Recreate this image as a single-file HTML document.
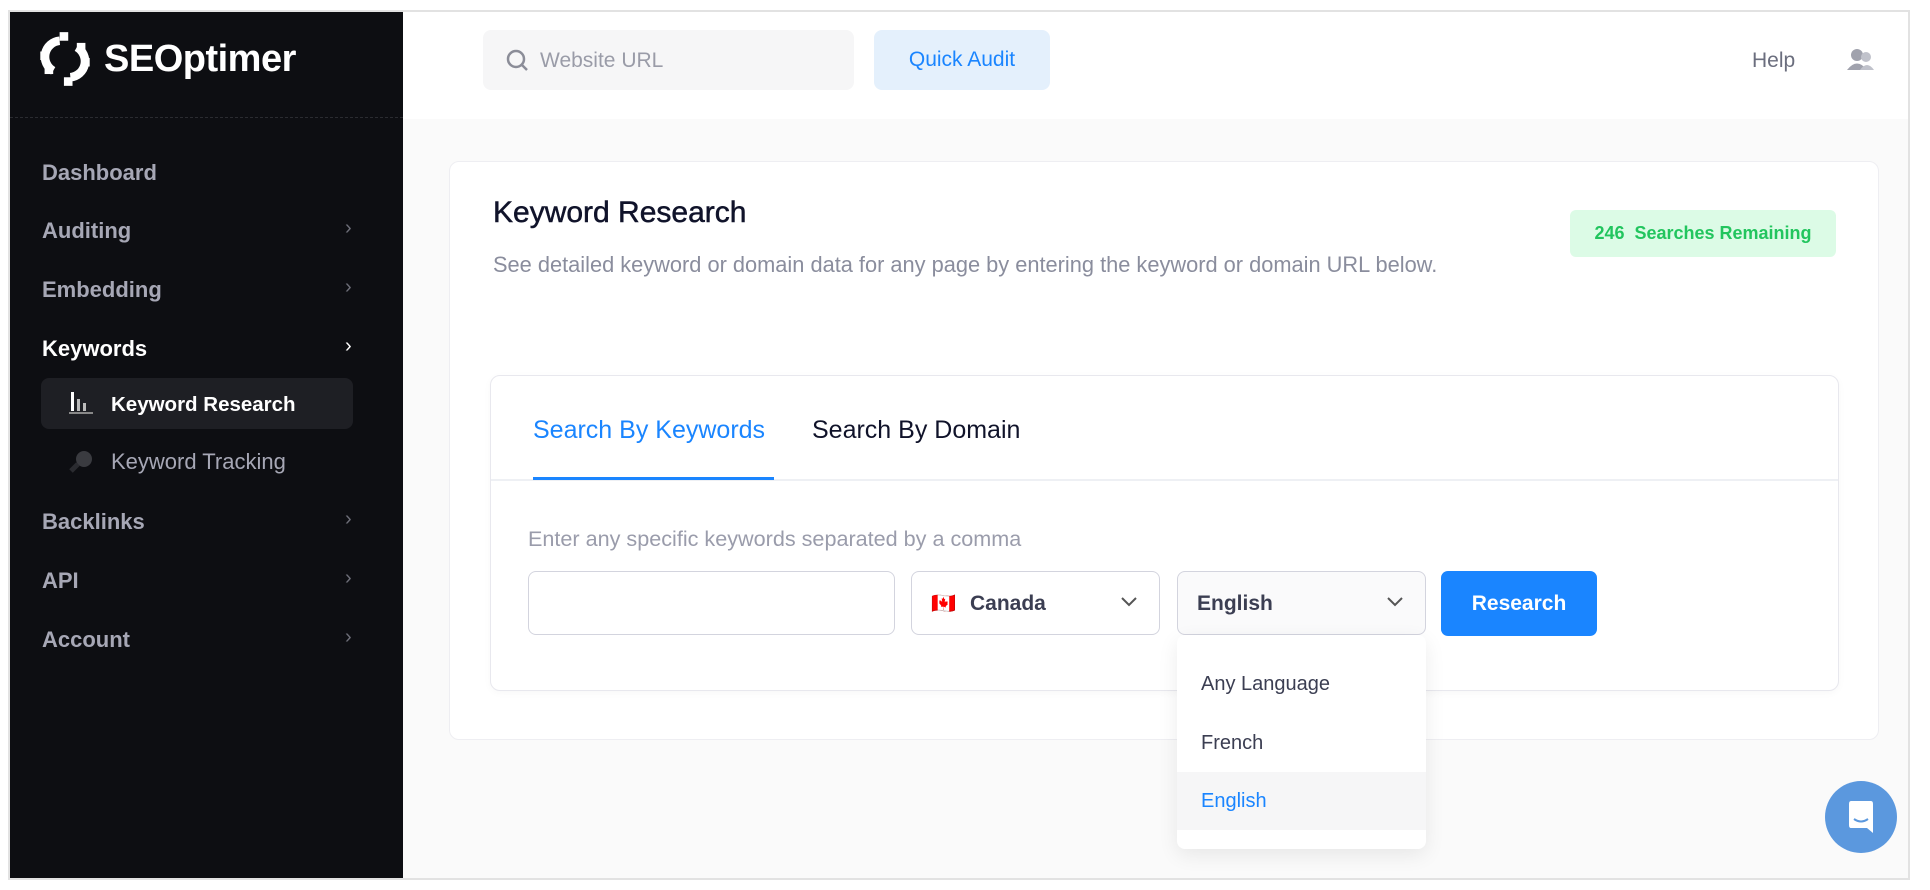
<!DOCTYPE html>
<html><head><meta charset="utf-8"><style>
*{box-sizing:border-box;margin:0;padding:0}
body{width:1930px;height:890px;background:#fff;font-family:"Liberation Sans",sans-serif;position:relative;overflow:hidden}
.frame{position:absolute;left:8px;top:10px;width:1902px;height:870px;border:2px solid #e2e2e2;background:#fafafa;overflow:hidden}
.side{position:absolute;left:0;top:0;width:393px;height:100%;background:#0d0e12}
.logo{position:absolute;left:24px;top:18px;display:flex;align-items:center;color:#fff;font-weight:bold;font-size:38px;letter-spacing:-0.5px}
.dash{position:absolute;left:0;top:105px;width:393px;border-top:1px dashed #2a2b30}
.mi{position:absolute;left:32px;font-size:22px;font-weight:bold;color:#a6a7b5}
.chev{position:absolute;left:335px;color:#6d6e78;font-size:20px}
.top{position:absolute;left:393px;top:0;right:0;height:107px;background:#fff}
.card{position:absolute;left:439px;top:149px;width:1430px;height:579px;background:#fff;border:1px solid #eeeef2;border-radius:10px}
.inner{position:absolute;left:480px;top:363px;width:1349px;height:316px;background:#fff;border:1px solid #e8e8ee;border-radius:10px;box-shadow:0 2px 8px rgba(0,0,0,0.03)}
.sel{position:absolute;top:559px;height:64px;border:1px solid #d3d4de;border-radius:8px;background:#fff}
</style></head><body>
<div class="frame">
<div class="side">
 <div class="logo"><svg width="62" height="58" viewBox="0 0 50 54"><g fill="none" stroke="#fff" stroke-width="8"><path d="M20 10 A15 15 0 0 0 14 38"/><path d="M30 44 A15 15 0 0 0 36 16"/></g><g fill="#fff"><rect x="20" y="2" width="8" height="8"/><rect x="2" y="20" width="8" height="8"/><rect x="24" y="44" width="8" height="8"/><rect x="40" y="26" width="8" height="8"/><rect x="6" y="34" width="8" height="7"/><rect x="36" y="12" width="8" height="7"/></g></svg><span style="margin-left:8px">SEOptimer</span></div>
 <div class="dash"></div>
 <div class="mi" style="top:148px">Dashboard</div>
 <div class="mi" style="top:206px">Auditing</div><div class="chev" style="top:205px">›</div>
 <div class="mi" style="top:265px">Embedding</div><div class="chev" style="top:264px">›</div>
 <div class="mi" style="top:324px;color:#fff">Keywords</div><div class="chev" style="top:323px;color:#fff">›</div>
 <div style="position:absolute;left:31px;top:366px;width:312px;height:51px;background:#1e1f24;border-radius:8px"></div>
 <svg style="position:absolute;left:58px;top:378px" width="26" height="26"><rect x="3" y="2" width="3" height="19" fill="#fff"/><rect x="9" y="9" width="3" height="12" fill="#bbb"/><rect x="15" y="13" width="3" height="8" fill="#bbb"/><rect x="1" y="22" width="24" height="2" fill="#888"/></svg>
 <div class="mi" style="left:101px;top:381px;color:#fff;font-size:20.5px">Keyword Research</div>
 <svg style="position:absolute;left:58px;top:437px" width="26" height="26"><circle cx="16" cy="10" r="8" fill="#3a3b40"/><path d="M10 15 L3 22" stroke="#2a2b30" stroke-width="5"/></svg>
 <div class="mi" style="left:101px;top:437px;color:#a6a7b5;font-size:22px;font-weight:normal">Keyword Tracking</div>
 <div class="mi" style="top:497px">Backlinks</div><div class="chev" style="top:496px">›</div>
 <div class="mi" style="top:556px">API</div><div class="chev" style="top:555px">›</div>
 <div class="mi" style="top:615px">Account</div><div class="chev" style="top:614px">›</div>
</div>
<div class="top">
 <div style="position:absolute;left:80px;top:18px;width:371px;height:60px;background:#f6f6f7;border-radius:8px"></div>
 <svg style="position:absolute;left:102px;top:36px" width="26" height="26"><circle cx="11" cy="11" r="8" fill="none" stroke="#8b8d98" stroke-width="2.5"/><path d="M17 17 L22 22" stroke="#8b8d98" stroke-width="2.5"/></svg>
 <div style="position:absolute;left:137px;top:37px;font-size:21px;color:#9a9ca8">Website URL</div>
 <div style="position:absolute;left:471px;top:18px;width:176px;height:60px;background:#e4f0fc;border-radius:8px;color:#1a85ff;font-size:21px;text-align:center;line-height:60px">Quick Audit</div>
 <div style="position:absolute;left:1349px;top:37px;font-size:21px;color:#6b6e7e">Help</div>
 <svg style="position:absolute;left:1443px;top:34px" width="30" height="28"><circle cx="11" cy="9" r="6" fill="#a0a2ad"/><path d="M1 24 Q11 11 21 24Z" fill="#a0a2ad"/><circle cx="20" cy="11" r="5" fill="#c0c2cb"/><path d="M14 24 Q21 14 28 24Z" fill="#c0c2cb"/></svg>
</div>
<div class="card">
 <div style="position:absolute;left:43px;top:34px;font-size:30px;color:#10132a;-webkit-text-stroke:0.5px #10132a">Keyword Research</div>
 <div style="position:absolute;left:43px;top:90px;font-size:21.8px;color:#8a8d9d">See detailed keyword or domain data for any page by entering the keyword or domain URL below.</div>
 <div style="position:absolute;left:1120px;top:48px;width:266px;height:47px;background:#dcfbe6;border-radius:6px;color:#22c55e;font-weight:bold;font-size:18px;text-align:center;line-height:47px">246&nbsp; Searches Remaining</div>
</div>
<div class="inner">
 <div style="position:absolute;left:42px;top:40px;font-size:25px;color:#1a85ff">Search By Keywords</div>
 <div style="position:absolute;left:321px;top:40px;font-size:25px;color:#10132a">Search By Domain</div>
 <div style="position:absolute;left:0;top:103px;width:100%;border-top:2px solid #eef0f4"></div>
 <div style="position:absolute;left:42px;top:101px;width:241px;height:3px;background:#1a85ff"></div>
 <div style="position:absolute;left:37px;top:150px;font-size:21.6px;color:#9a9cab">Enter any specific keywords separated by a comma</div>
</div>
<div class="sel" style="left:518px;width:367px"></div>
<div class="sel" style="left:901px;width:249px"><span style="position:absolute;left:19px;top:19px;font-size:20px">🇨🇦</span><span style="position:absolute;left:58px;top:20px;font-size:21px;font-weight:bold;color:#3b3e52">Canada</span><svg style="position:absolute;left:208px;top:24px" width="18" height="12"><path d="M2 2 L9 9 L16 2" fill="none" stroke="#555" stroke-width="2"/></svg></div>
<div class="sel" style="left:1167px;width:249px;background:#fafafb"><span style="position:absolute;left:19px;top:20px;font-size:21px;font-weight:bold;color:#3b3e52">English</span><svg style="position:absolute;left:208px;top:24px" width="18" height="12"><path d="M2 2 L9 9 L16 2" fill="none" stroke="#555" stroke-width="2"/></svg></div>
<div style="position:absolute;left:1431px;top:559px;width:156px;height:65px;background:#1a85ff;border-radius:7px;color:#fff;font-size:21px;font-weight:bold;text-align:center;line-height:65px">Research</div>
<div style="position:absolute;left:1167px;top:623px;width:249px;height:214px;background:#fff;border-radius:8px;box-shadow:0 6px 20px rgba(0,0,0,0.08)">
 <div style="position:absolute;left:24px;top:38px;font-size:20px;color:#3b3e52">Any Language</div>
 <div style="position:absolute;left:24px;top:97px;font-size:20px;color:#3b3e52">French</div>
 <div style="position:absolute;left:0;top:137px;width:100%;height:58px;background:#f6f6f7"></div>
 <div style="position:absolute;left:24px;top:155px;font-size:20px;color:#1a85ff">English</div>
</div>
<div style="position:absolute;left:1815px;top:769px;width:72px;height:72px;border-radius:50%;background:#5b98de"></div>
<svg style="position:absolute;left:1837px;top:789px" width="28" height="34"><path d="M4 0 H24 Q26 0 26 3 V32 L20 27 H4 Q2 27 2 24 V3 Q2 0 4 0Z" fill="#fff"/><path d="M7 18 Q14 23 21 18" fill="none" stroke="#5b98de" stroke-width="2"/></svg>
</div>
</body></html>
